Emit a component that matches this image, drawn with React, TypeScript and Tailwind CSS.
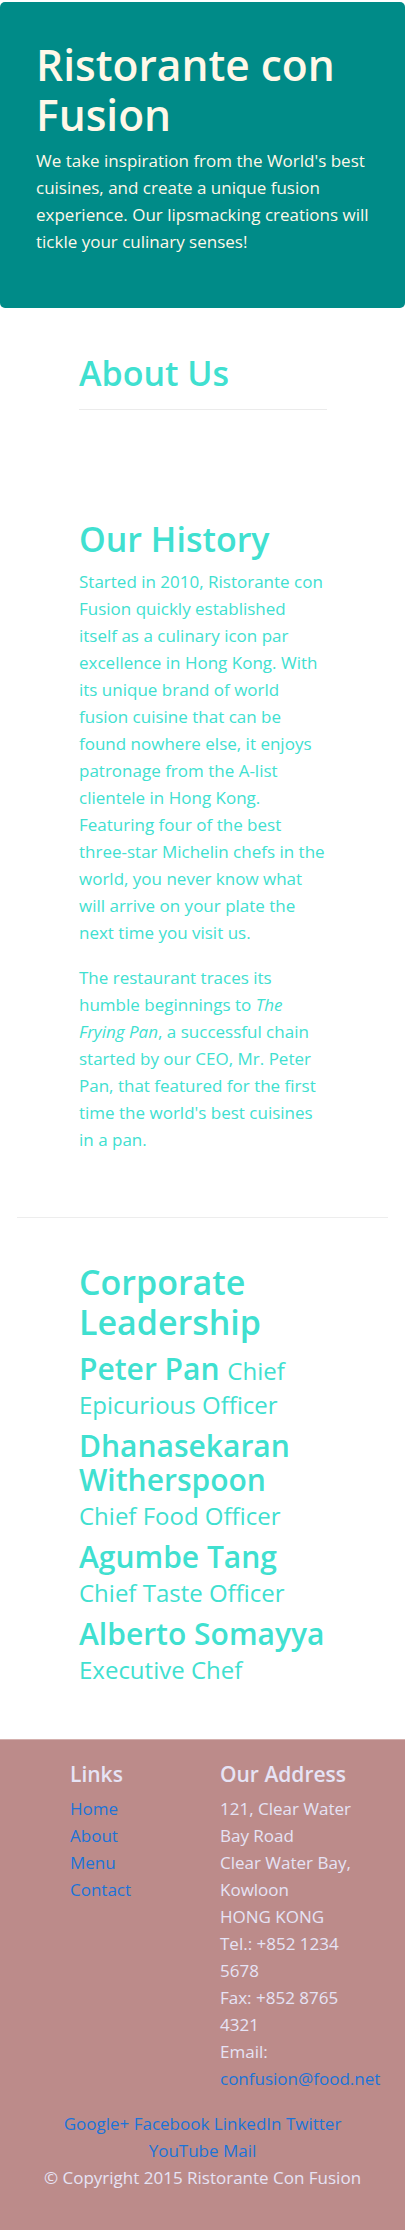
import React from "react";

const leaders = [
  { name: "Peter Pan", title: "Chief Epicurious Officer" },
  { name: "Dhanasekaran Witherspoon", title: "Chief Food Officer" },
  { name: "Agumbe Tang", title: "Chief Taste Officer" },
  { name: "Alberto Somayya", title: "Executive Chef" },
];

const links = ["Home", "About", "Menu", "Contact"];
const social = ["Google+", "Facebook", "LinkedIn", "Twitter", "YouTube", "Mail"];

export default function App() {
  return (
    <div className="min-h-screen bg-white font-['Open_Sans',sans-serif] text-[17px] leading-[27px]">
      {/* Jumbotron */}
      <header className="mt-[2px] rounded-[5px] bg-[#008b88] pl-[36px] pr-[30px] pt-[38px] pb-[53px] text-[#fff8e8]">
        <h1 className="mb-[7px] text-[42.5px] leading-[50px] font-semibold">
          Ristorante con Fusion
        </h1>
        <p>
          We take inspiration from the World's best cuisines, and create a
          unique fusion experience. Our lipsmacking creations will tickle your
          culinary senses!
        </p>
      </header>

      <main className="text-[#40e0d0]">
        {/* About */}
        <section className="ml-[79px] w-[248px] pt-[44px]">
          <h2 className="text-[34px] leading-[43px] font-semibold">About Us</h2>
          <div className="mt-[14px] h-px bg-[#ebebeb]" />

          <h2 className="mt-[108px] mb-[7px] text-[34px] leading-[43px] font-semibold">
            Our History
          </h2>
          <p className="mb-[18px]">
            Started in 2010, Ristorante con Fusion quickly established itself
            as a culinary icon par excellence in Hong Kong. With its unique
            brand of world fusion cuisine that can be found nowhere else, it
            enjoys patronage from the A-list clientele in Hong Kong. Featuring
            four of the best three-star Michelin chefs in the world, you never
            know what will arrive on your plate the next time you visit us.
          </p>
          <p>
            The restaurant traces its humble beginnings to{" "}
            <em>The Frying Pan</em>, a successful chain started by our CEO,
            Mr. Peter Pan, that featured for the first time the world's best
            cuisines in a pan.
          </p>
        </section>

        <div className="mx-[17px] mt-[64px] h-px bg-[#ededed]" />

        {/* Leadership */}
        <section className="ml-[79px] w-[248px] pt-[44px] pb-[45px]">
          <h2 className="mb-[10px] text-[34px] leading-[40px] font-semibold">
            Corporate Leadership
          </h2>
          {leaders.map((l) => (
            <h3
              key={l.name}
              className="mb-[9px] text-[30px] leading-[34px] font-semibold"
            >
              {l.name}{" "}
              <small className="text-[24px] leading-[28px] font-normal">
                {l.title}
              </small>
            </h3>
          ))}
        </section>
      </main>

      {/* Footer */}
      <footer className="border-t border-[#d4b0ae] bg-[#bc8b8a] pt-[21px] pb-[39px] text-[#e6e3f5]">
        <div className="flex pl-[70px]">
          <div className="w-[150px]">
            <h5 className="mb-[8px] text-[21px] leading-[26px] font-semibold">
              Links
            </h5>
            <ul>
              {links.map((l) => (
                <li key={l}>
                  <a href="#" className="text-[#1a73d9]">
                    {l}
                  </a>
                </li>
              ))}
            </ul>
          </div>
          <div className="w-[152px]">
            <h5 className="mb-[8px] text-[21px] leading-[26px] font-semibold">
              Our Address
            </h5>
            <address className="not-italic">
              121, Clear Water Bay Road
              <br />
              Clear Water Bay, Kowloon
              <br />
              HONG KONG
              <br />
              Tel.: +852 1234 5678
              <br />
              Fax: +852 8765 4321
              <br />
              Email:{" "}
              <a href="#" className="text-[#1a73d9]">
                confusion@food.net
              </a>
            </address>
          </div>
        </div>

        <div className="mx-auto mt-[18px] w-[330px] text-center">
          <div>
            {social.map((s, i) => (
              <React.Fragment key={s}>
                <a href="#" className="text-[#1a73d9]">
                  {s}
                </a>
                {i < social.length - 1 ? " " : ""}
              </React.Fragment>
            ))}
          </div>
          <p>© Copyright 2015 Ristorante Con Fusion</p>
        </div>
      </footer>
    </div>
  );
}
